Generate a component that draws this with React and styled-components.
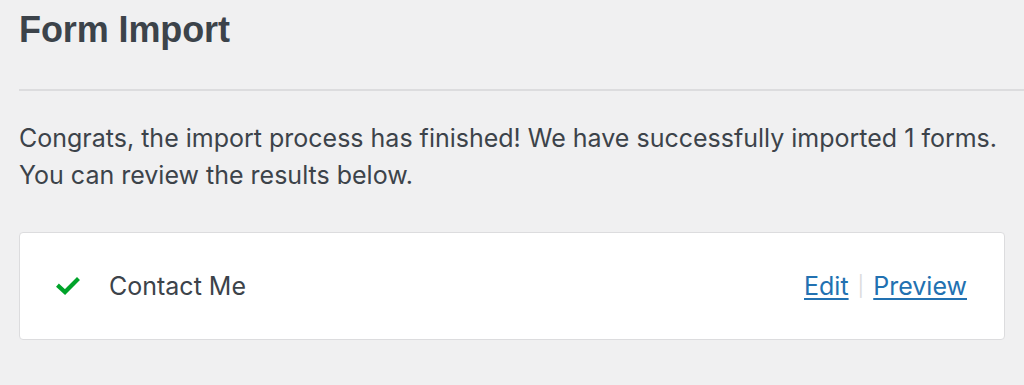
import styled, { createGlobalStyle } from "styled-components";

const GlobalStyle = createGlobalStyle`
    html, body {
        margin: 0;
        padding: 0;
        background: #f0f0f1;
    }
    body {
        font-family: Inter, "Liberation Sans", Arial, sans-serif;
        color: #3c434a;
    }
`
const Wrap = styled.div`
    padding: 0 19px;
`
const Title = styled.h1`
    margin: 0;
    padding: 8px 0 0 0;
    font-family: "Liberation Sans", Arial, sans-serif;
    font-size: 36px;
    line-height: 44px;
    font-weight: 700;
    color: #3c434a;
    letter-spacing: -0.1px;
`
const Divider = styled.hr`
    border: 0;
    border-top: 2px solid #dcdcde;
    margin: 37px -19px 0 0;
`
const Message = styled.p`
    margin: 29px 0 0 0;
    font-size: 25px;
    line-height: 37px;
`
const Card = styled.div`
    display: flex;
    align-items: center;
    margin: 38px 0 0 0;
    width: 986px;
    height: 108px;
    box-sizing: border-box;
    background: #fff;
    border: 1px solid #dcdcde;
    border-radius: 4px;
    padding: 0 37px 0 36px;
`
const Check = styled.svg`
    width: 24px;
    height: 20px;
    flex: none;
    margin-right: 29px;
`
const Name = styled.span`
    flex: 1;
    font-size: 25px;
`
const Actions = styled.div`
    display: flex;
    align-items: center;
    gap: 9px;
    font-size: 25px;
`
const Link = styled.a`
    color: #2271b1;
    text-decoration: underline;
    text-underline-offset: 3px;
    cursor: pointer;
`
const Sep = styled.span`
    color: #dcdcde;
    font-size: 20px;
`

export default function App() {
    return (
        <>
            <GlobalStyle />
            <Wrap>
                <Title>Form Import</Title>
                <Divider />
                <Message>
                    Congrats, the import process has finished! We have successfully imported 1 forms.
                    <br />
                    You can review the results below.
                </Message>
                <Card>
                    <Check viewBox="0 0 24 20">
                        <path d="M3 10.5 L9 16 L21 4" fill="none" stroke="#00a32a" strokeWidth="4.2" strokeLinecap="square" strokeLinejoin="miter" />
                    </Check>
                    <Name>Contact Me</Name>
                    <Actions>
                        <Link>Edit</Link>
                        <Sep>|</Sep>
                        <Link>Preview</Link>
                    </Actions>
                </Card>
            </Wrap>
        </>
    )
}
